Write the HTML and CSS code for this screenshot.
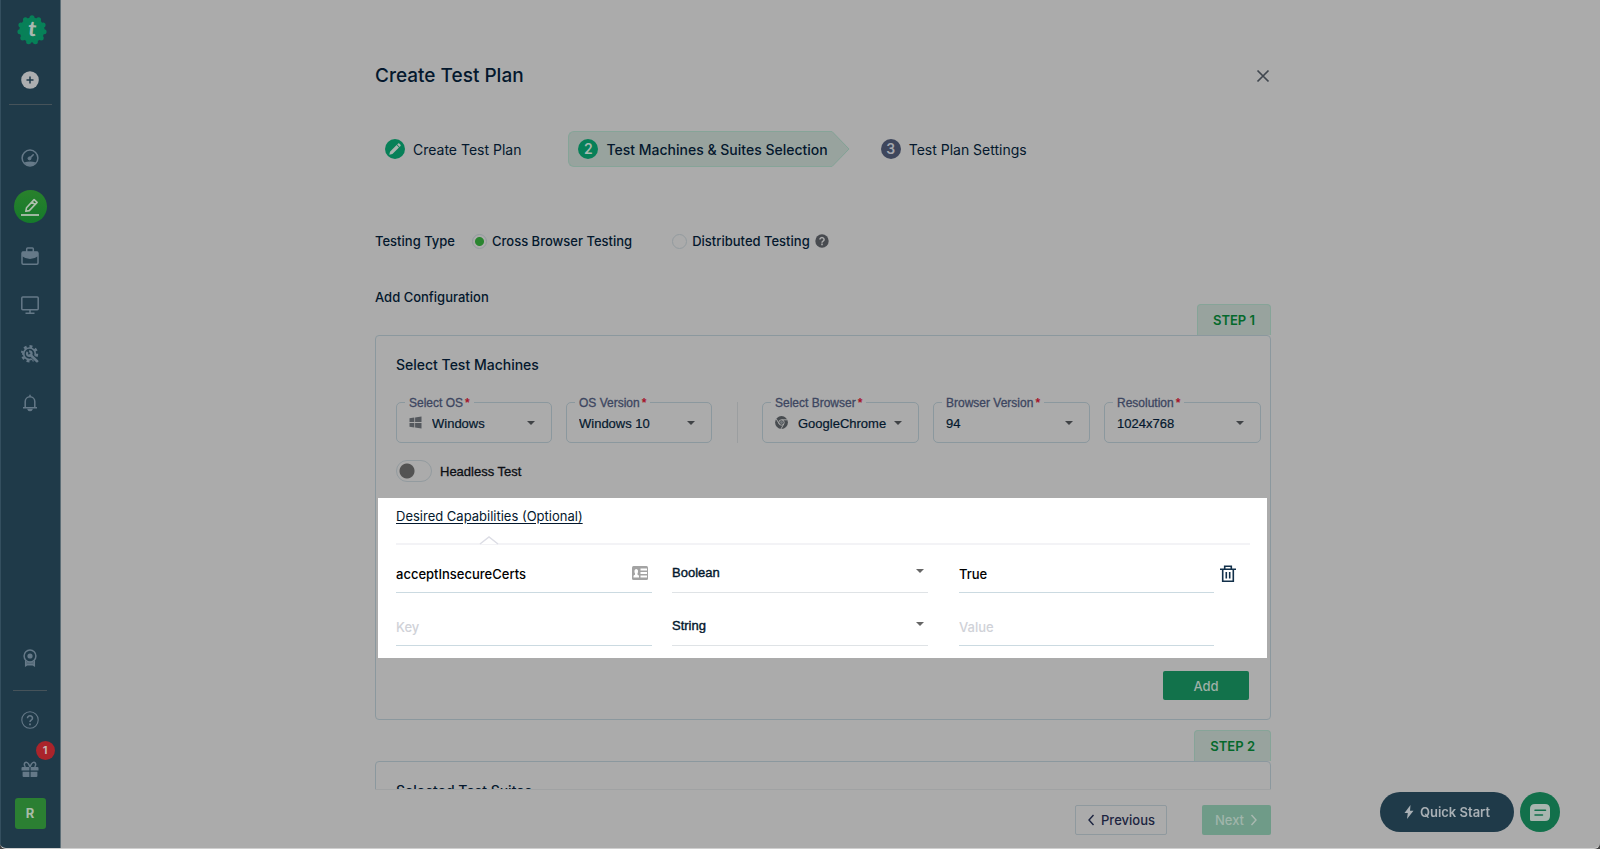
FILE: index.html
```
<!DOCTYPE html>
<html lang="en">
<head>
    <meta charset="UTF-8">
    <meta name="viewport" content="width=device-width, initial-scale=1.0">
    <title>Create Test Plan</title>
    <link rel="stylesheet" href="styles.css">
</head>
<body>
    <div class="app">
        <nav class="sidebar">
            <a href="#" class="logo" aria-label="Home">
                <svg width="32" height="32" viewBox="0 0 32 32">
                    <circle cx="16" cy="16" r="12.5" fill="#078058"/>
                    <circle cx="16" cy="16" r="12.2" fill="none" stroke="#078058" stroke-width="5" stroke-linecap="round" pathLength="11" stroke-dasharray="0 1" transform="rotate(-90 16 16)"/>
                    <text x="16" y="22" text-anchor="middle" class="logo-text" transform="rotate(6 16 16)">t</text>
                </svg>
            </a>
            <a href="#" class="nav-item add-item" aria-label="Add">
                <svg width="18" height="18" viewBox="0 0 18 18">
                    <circle cx="9" cy="9" r="8.8" fill="#acaeb0"/>
                    <path d="M9 5.500v7M5.500 9h7" stroke="#1f3a49" stroke-width="1.500"/>
                </svg>
            </a>
            <hr class="nav-line">
            <a href="#" class="nav-item" aria-label="Dashboard">
                <svg width="18" height="18" viewBox="0 0 18 18" fill="none" stroke="#657988">
                    <circle cx="9" cy="9" r="7.9" stroke-width="1.5"/>
                    <path d="M3 13.600Q9 11.200 15 13.600Q12.500 16.800 9 16.800T3 13.600z" fill="#657988" stroke="none"/>
                    <path d="M8.600 9.400L12.200 5.800" stroke-width="1.600" stroke-linecap="round"/>
                    <circle cx="8.500" cy="9.400" r="1.500" fill="#657988"/>
                </svg>
            </a>
            <a href="#" class="nav-item active" aria-label="Test development">
                <svg width="18" height="18" viewBox="0 0 18 18" fill="none" stroke="#aebfae" stroke-width="1.600">
                    <path d="M4.800 13.300l.7-3.500 7.600-8.200 3 2.800-7.800 8.200zM11 4l2.900 2.700" stroke-linejoin="round"/>
                    <path d="M0 17h18" stroke-width="1.800"/>
                </svg>
            </a>
            <a href="#" class="nav-item" aria-label="Test suites">
                <svg width="18" height="18" viewBox="0 0 18 18">
                    <path d="M5.700 5V1.900Q5.700 1 6.600 1h4.800q.9 0 .9.900V5" fill="none" stroke="#657988" stroke-width="1.500"/>
                    <rect x="1" y="5" width="16" height="12.200" rx="1.200" fill="none" stroke="#657988" stroke-width="1.500"/>
                    <path d="M1 4.800h16v4.400Q13 12 9 12T1 9.200z" fill="#657988"/>
                </svg>
            </a>
            <a href="#" class="nav-item" aria-label="Machines">
                <svg width="18" height="18" viewBox="0 0 18 18" fill="none" stroke="#657988" stroke-width="1.500">
                    <rect x=".8" y="1" width="16.400" height="12.800" rx="1"/>
                    <path d="M9 14v3M4.500 17.200h9"/>
                </svg>
            </a>
            <a href="#" class="nav-item" aria-label="Settings">
                <svg width="18" height="18" viewBox="0 0 18 18" fill="none" stroke="#657988">
                    <circle cx="8.500" cy="8.800" r="5.800" stroke-width="1.700"/>
                    <circle cx="8.500" cy="8.800" r="7.400" stroke-width="2.600" pathLength="16" stroke-dasharray="1 1"/>
                    <circle cx="8.300" cy="8.600" r="2.300" stroke-width="2.200" stroke-dasharray="11.500 3" transform="rotate(-95 8.300 8.600)"/>
                    <path d="M11.500 11.500l4.500 4.700" stroke="#1f3a49" stroke-width="4"/>
                    <path d="M9.500 10l6.600 6.200" stroke-width="2.600" stroke-linecap="round"/>
                </svg>
            </a>
            <a href="#" class="nav-item" aria-label="Notifications">
                <svg width="18" height="18" viewBox="0 0 18 18" fill="none" stroke="#657988" stroke-width="1.500">
                    <path d="M4.200 13.500V7.600a4.800 4.800 0 0 1 9.600 0v5.900M2 13.700h14M9 2.800V.7"/>
                    <path d="M7.200 15.500a1.900 1.600 0 0 0 3.600 0z" fill="#657988"/>
                </svg>
            </a>
            <div class="nav-bottom">
                <a href="#" class="nav-item" aria-label="Rewards">
                    <svg width="18" height="18" viewBox="0 0 18 18" fill="none" stroke="#657988" stroke-width="1.500">
                        <circle cx="9" cy="7" r="5.900"/>
                        <circle cx="9" cy="7" r="2.600" fill="#657988" stroke="none"/>
                        <path d="M4.700 11.300v5.400l1.700-1h5.200l1.700 1v-5.400M4.700 13.900h8.600"/>
                    </svg>
                </a>
                <hr class="nav-line short">
                <a href="#" class="nav-item" aria-label="Help">
                    <svg width="18" height="18" viewBox="0 0 18 18" fill="none" stroke="#657988">
                        <circle cx="9" cy="9" r="8.200" stroke-width="1.100"/>
                        <path d="M6.500 7.200a2.500 2.300 0 1 1 4 1.700q-1.500.9-1.500 2.200" stroke-width="1.600"/>
                        <path d="M9 12.400v1.800" stroke-width="1.800"/>
                    </svg>
                </a>
                <a href="#" class="nav-item gift" aria-label="What is new">
                    <svg width="18" height="18" viewBox="0 0 18 18" fill="#657988">
                        <path d="M1.500 7h6.900v3.600H.5V8q0-1 1-1zM9.600 7h6.900q1 0 1 1v2.600H9.600zM1.600 11.800h6.800v5.100H2.600q-1 0-1-1zM9.600 11.800h6.800v4.100q0 1-1 1H9.600z"/>
                        <path d="M9 7Q7.200 2 5 2.200C2.800 2.400 2.900 6 4.500 6.800M9 7q1.800-5 4-4.800c2.200.2 2.100 3.800.5 4.600" fill="none" stroke="#657988" stroke-width="1.500"/>
                    </svg>
                    <span class="count">1</span>
                </a>
                <a href="#" class="avatar">R</a>
            </div>
        </nav>

        <main class="main">
            <div class="content">
                <div class="page">
                    <header class="page-header">
                        <h1>Create Test Plan</h1>
                        <button type="button" class="close" aria-label="Close">
                            <svg width="14" height="14" viewBox="0 0 14 14"><path d="M1.500 1.500l11 11M12.500 1.500l-11 11" stroke="#40474f" stroke-width="1.700"/></svg>
                        </button>
                    </header>

                    <div class="steps">
                        <a href="#" class="step">
                            <span class="dot">
                                <svg width="20" height="20" viewBox="0 0 20 20"><path d="M4.300 15.700l.7-3 6.600-6.600 2.400 2.400-6.600 6.600zM12.200 5.500l.9-.9q.6-.6 1.200 0l1.200 1.200q.6.600 0 1.200l-.9.900z" fill="#a9b4af"/></svg>
                            </span>
                            Create Test Plan
                        </a>
                        <a href="#" class="step step-current">
                            <span class="dot">2</span>
                            Test Machines &amp; Suites Selection
                            <svg class="step-arrow" width="18" height="36" viewBox="0 0 18 36"><path d="M0 .5L17 18 0 35.500" fill="#98a39e" stroke="#82a295"/></svg>
                        </a>
                        <a href="#" class="step step-next">
                            <span class="dot">3</span>
                            Test Plan Settings
                        </a>
                    </div>

                    <div class="testing-type">
                        <span class="type-title">Testing Type</span>
                        <label class="radio cross"><input type="radio" name="type" checked>Cross Browser Testing</label>
                        <label class="radio"><input type="radio" name="type">Distributed Testing</label>
                        <svg width="14" height="14" viewBox="0 0 14 14">
                            <circle cx="7" cy="7" r="6.700" fill="#484b50"/>
                            <path d="M4.900 5.500a2.100 1.900 0 1 1 3.200 1.600q-1.100.6-1.100 1.600" fill="none" stroke="#ababab" stroke-width="1.500"/>
                            <path d="M7 9.600v1.600" stroke="#ababab" stroke-width="1.600"/>
                        </svg>
                    </div>

                    <div class="config-row">
                        <h2>Add Configuration</h2>
                        <span class="step-tab">STEP 1</span>
                    </div>

                    <section class="card">
                        <h3>Select Test Machines</h3>
                        <div class="machines">
                            <div class="field with-icon">
                                <label for="os">Select OS<b>*</b></label>
                                <svg class="field-icon" width="13" height="13" viewBox="0 0 13 13"><path d="M.5 2.200l4.800-.7v4.600H.5zM6.100 1.400l6.400-1v5.700H6.100zM.5 6.900h4.800v4.600l-4.800-.7zM6.100 6.900h6.400v5.700l-6.400-1z" fill="#55595e"/></svg>
                                <select id="os"><option>Windows</option></select>
                                <svg class="caret" width="8" height="4" viewBox="0 0 8 4"><path d="M0 0h8L4 4z" fill="#404346"/></svg>
                            </div>
                            <div class="field">
                                <label for="osv">OS Version<b>*</b></label>
                                <select id="osv"><option>Windows 10</option></select>
                                <svg class="caret" width="8" height="4" viewBox="0 0 8 4"><path d="M0 0h8L4 4z" fill="#404346"/></svg>
                            </div>
                            <div class="separator"></div>
                            <div class="field with-icon">
                                <label for="browser">Select Browser<b>*</b></label>
                                <svg class="field-icon" width="13" height="13" viewBox="0 0 14 14">
                                    <circle cx="7" cy="7" r="6.900" fill="#484c50"/>
                                    <g fill="none" stroke="#ababab"><circle cx="7" cy="7" r="2.900"/><path d="M7 4.100h6.300M4.500 8.500L1.400 3.200M9.500 8.500L6.400 14"/></g>
                                    <circle cx="7" cy="7" r="1.600" fill="#72767a"/>
                                </svg>
                                <select id="browser"><option>GoogleChrome</option></select>
                                <svg class="caret" width="8" height="4" viewBox="0 0 8 4"><path d="M0 0h8L4 4z" fill="#404346"/></svg>
                            </div>
                            <div class="field">
                                <label for="browserv">Browser Version<b>*</b></label>
                                <select id="browserv"><option>94</option></select>
                                <svg class="caret" width="8" height="4" viewBox="0 0 8 4"><path d="M0 0h8L4 4z" fill="#404346"/></svg>
                            </div>
                            <div class="field">
                                <label for="resolution">Resolution<b>*</b></label>
                                <select id="resolution"><option>1024x768</option></select>
                                <svg class="caret" width="8" height="4" viewBox="0 0 8 4"><path d="M0 0h8L4 4z" fill="#404346"/></svg>
                            </div>
                        </div>
                        <label class="toggle"><input type="checkbox">Headless Test</label>

                        <div class="capabilities">
                            <a href="#" class="cap-link">Desired Capabilities (Optional)</a>
                            <div class="cap-line">
                                <svg width="20" height="9" viewBox="0 0 20 9"><path d="M1 8l9-7 9 7" fill="#fff" stroke="#dcdde5" stroke-width="1.500"/></svg>
                            </div>
                            <div class="cap-grid">
                                <div class="cap-cell key">
                                    <input type="text" aria-label="Key" value="acceptInsecureCerts">
                                    <svg class="contact" width="16" height="14" viewBox="0 0 16 14">
                                        <rect width="16" height="14" rx="1.500" fill="#a3a3a3"/>
                                        <path d="M1.500 11.500V10q0-1 1.500-1.300V7.500Q2.200 6.500 2.500 4.500 2.800 3 4.200 3T6 4.500Q6.200 6.500 5.500 7.500v1.200Q7 9 7 10v1.500zM8.500 2.500H15v2H8.500zM8.500 6H15v2H8.500zM8.500 9.500H15v2H8.500z" fill="#fff"/>
                                    </svg>
                                </div>
                                <div class="cap-cell">
                                    <select aria-label="Type"><option>Boolean</option></select>
                                    <svg class="caret" width="8" height="4" viewBox="0 0 8 4"><path d="M0 0h8L4 4z" fill="#666"/></svg>
                                </div>
                                <div class="cap-cell value"><input type="text" aria-label="Value" value="True"></div>
                                <button type="button" class="delete" aria-label="Delete">
                                    <svg width="16" height="18" viewBox="0 0 16 18" fill="none" stroke="#12304a" stroke-width="1.600">
                                        <path d="M0 4.300h16M4.700 4V1.300h6.600V4M2.700 4.300v11.900h10.600V4.300M6.300 7v6.500M9.700 7v6.500"/>
                                    </svg>
                                </button>
                                <div class="cap-cell key"><input type="text" aria-label="Key" placeholder="Key"></div>
                                <div class="cap-cell">
                                    <select aria-label="Type"><option>String</option></select>
                                    <svg class="caret" width="8" height="4" viewBox="0 0 8 4"><path d="M0 0h8L4 4z" fill="#666"/></svg>
                                </div>
                                <div class="cap-cell value"><input type="text" aria-label="Value" placeholder="Value"></div>
                            </div>
                        </div>

                        <div class="card-actions">
                            <button type="button" class="add-btn">Add</button>
                        </div>
                    </section>

                    <div class="config-row second">
                        <span class="step-tab">STEP 2</span>
                    </div>
                    <section class="card">
                        <h3>Selected Test Suites</h3>
                    </section>
                </div>
            </div>

            <footer class="footer">
                <div class="page footer-inner">
                    <button type="button" class="prev">
                        <svg width="8" height="12" viewBox="0 0 8 12"><path d="M6.500 1L2 6l4.500 5" fill="none" stroke="#1c2440" stroke-width="1.400"/></svg>
                        Previous
                    </button>
                    <button type="button" class="next">
                        Next
                        <svg width="8" height="12" viewBox="0 0 8 12"><path d="M1.500 1L6 6l-4.500 5" fill="none" stroke="#a9b8b0" stroke-width="1.400"/></svg>
                    </button>
                </div>
            </footer>
        </main>

        <div class="floating">
            <button type="button" class="quick-start">
                <svg width="10" height="14" viewBox="0 0 10 14"><path d="M6.500 0L.5 8h3.300L3 14l6.500-8.300H6z" fill="#a9b0b5"/></svg>
                Quick Start
            </button>
            <button type="button" class="chat" aria-label="Chat">
                <svg width="20" height="17" viewBox="0 0 20 17">
                    <path d="M5 0h10q5 0 5 5v7q0 5-5 5H1.500Q0 17 0 15.500V5q0-5 5-5z" fill="#a8b5af"/>
                    <path d="M5 6.300h10.500M5 11h7.500" stroke="#12704b" stroke-width="1.500" stroke-linecap="round"/>
                </svg>
            </button>
        </div>
    </div>
</body>
</html>
```
FILE: styles.css
```
* {
    box-sizing: border-box;
}

html {
    background-color: #444;
}

body {
    font-family: Inter, sans-serif;
    font-size: 13px;
    color: #04182d;
    margin: 0;
}

h1, h2, h3 {
    margin: 0;
    font-weight: 500;
}

a {
    color: inherit;
    text-decoration: none;
}

svg {
    display: block;
    flex: none;
}

button, input, select {
    font-family: inherit;
    font-size: inherit;
    color: inherit;
    margin: 0;
}

button {
    cursor: pointer;
    border: none;
    padding: 0;
    background: none;
}

.app {
    display: flex;
    height: 100vh;
    background-color: #ababab;
    border-bottom: 1px solid #cfcfcf;
    border-radius: 0 0 6px 6px;
    overflow: hidden;
}

/* Sidebar */
.sidebar {
    width: 61px;
    flex: none;
    display: flex;
    flex-direction: column;
    align-items: center;
    background-color: #1f3a49;
    border-left: 1px solid #344f5f;
    border-right: 1px solid #5c6d76;
    padding-top: 14px;
    padding-right: 1px;
}

.logo {
    margin-left: 3px;
}

.logo-text {
    font-family: Lato, sans-serif;
    font-size: 21px;
    font-weight: 900;
    fill: #a9b8b1;
}

.nav-item {
    display: flex;
    justify-content: center;
    align-items: center;
    width: 33px;
    height: 33px;
    margin-bottom: 16px;
    position: relative;
}

.add-item {
    margin: 17px 0 8px;
}

.nav-line {
    width: 43px;
    margin: 0 0 36px;
    border: none;
    border-top: 1px solid #46535a;
}

.nav-line.short {
    width: 34px;
    margin: 0 0 12px;
}

.nav-item.active {
    border-radius: 50%;
    background: linear-gradient(#29812c, #157a2b);
}

.nav-bottom {
    margin-top: auto;
    margin-bottom: 19px;
    display: flex;
    flex-direction: column;
    align-items: center;
}

.nav-item.gift {
    margin-bottom: 13px;
}

.count {
    position: absolute;
    top: -11px;
    right: -8px;
    width: 19px;
    height: 19px;
    border-radius: 50%;
    background-color: #aa242b;
    color: #c5b3b4;
    font-size: 11px;
    font-weight: 700;
    line-height: 19px;
    text-align: center;
}

.avatar {
    width: 31px;
    height: 31px;
    border-radius: 3px;
    background-color: #2b7f32;
    color: #a9bca9;
    font-weight: 700;
    line-height: 31px;
    text-align: center;
}

/* Main column */
.main {
    flex: 1;
    display: flex;
    flex-direction: column;
    min-width: 0;
}

.content {
    flex: 1;
    min-height: 0;
    overflow: hidden;
    padding-right: 15px;
}

.page {
    max-width: 896px;
    margin: 0 auto;
}

.page-header {
    display: flex;
    justify-content: space-between;
    align-items: center;
    padding-top: 64px;
}

.page-header h1 {
    font-size: 19px;
    line-height: 24px;
}

.close {
    padding: 1px;
}

/* Steps */
.steps {
    display: flex;
    align-items: center;
    margin-top: 43px;
    padding-left: 10px;
    font-size: 14px;
}

.step {
    display: flex;
    align-items: center;
    gap: 8px;
    height: 36px;
}

.dot {
    width: 20px;
    height: 20px;
    border-radius: 50%;
    background-color: #078058;
    color: #a9b8b1;
    font-weight: 600;
    line-height: 20px;
    text-align: center;
}

.step-current {
    position: relative;
    margin-left: 47px;
    padding: 0 4px 0 9px;
    border: 1px solid #86a498;
    border-right: none;
    border-radius: 6px 0 0 6px;
    background-color: #98a39e;
    font-weight: 500;
}

.step-arrow {
    position: absolute;
    left: 100%;
    top: -1px;
}

.step-next {
    margin-left: 49px;
}

.step-next .dot {
    background-color: #3e465c;
    color: #a4a7ae;
}

/* Testing type */
.testing-type {
    display: flex;
    align-items: center;
    height: 20px;
    margin-top: 64px;
    font-weight: 500;
}

.type-title {
    margin-right: 17px;
}

.radio {
    display: flex;
    align-items: center;
    gap: 5px;
    margin-right: 5px;
}

.radio.cross {
    margin-right: 40px;
}

.radio input {
    appearance: none;
    width: 15px;
    height: 15px;
    border: 1px solid #939b9f;
    border-radius: 50%;
}

.radio input:checked {
    background: radial-gradient(circle, #2a8530 4px, transparent 5px);
}

.config-row {
    display: flex;
    justify-content: space-between;
    height: 48px;
    margin-top: 36px;
}

.config-row.second {
    justify-content: flex-end;
    height: 31px;
    margin-top: 10px;
}

.config-row h2 {
    font-size: 13px;
    line-height: 20px;
}

.step-tab {
    align-self: flex-end;
    height: 31px;
    padding: 0 15px;
    border: 1px solid #86a498;
    border-bottom: none;
    border-radius: 4px 4px 0 0;
    background-color: #98a39e;
    color: #04692b;
    font-weight: 600;
    line-height: 31px;
}

/* Card */
.card {
    border: 1px solid #8b989e;
    border-radius: 4px;
    padding: 19px 0;
}

.card h3 {
    padding-left: 20px;
    font-size: 14px;
    line-height: 20px;
}

.machines {
    display: grid;
    grid-template-columns: 156fr 146fr 22px 157fr 157fr 157fr;
    gap: 14px;
    margin: 27px 9px 0 20px;
}

.separator {
    justify-self: center;
    width: 1px;
    background-color: #9b9ea0;
}

.field {
    position: relative;
    height: 41px;
    border: 1px solid #8b989e;
    border-radius: 5px;
}

.field label {
    position: absolute;
    top: -8px;
    left: 8px;
    padding: 0 4px;
    background-color: #ababab;
    color: #3d4660;
    font-family: "Liberation Sans", Arial, sans-serif;
    font-size: 12px;
    line-height: 16px;
    -webkit-text-stroke: 0.3px #3d4660;
}

.field b {
    margin-left: 2px;
    color: #a5142a;
    -webkit-text-stroke: 0;
}

.field select {
    appearance: none;
    width: 100%;
    height: 39px;
    padding: 1px 20px 0 12px;
    border: none;
    background: none;
    font-family: "Liberation Sans", Arial, sans-serif;
    -webkit-text-stroke: 0.2px #04182d;
}

.field.with-icon select {
    padding-left: 35px;
}

.field-icon {
    position: absolute;
    top: 13px;
    left: 12px;
}

.field .caret {
    position: absolute;
    top: 18px;
    right: 16px;
    pointer-events: none;
}

.toggle {
    display: inline-flex;
    align-items: center;
    gap: 8px;
    margin: 17px 0 0 20px;
    color: #0c0f14;
    font-family: "Liberation Sans", Arial, sans-serif;
    vertical-align: top;
    -webkit-text-stroke: 0.3px #0c0f14;
}

.toggle input {
    appearance: none;
    width: 36px;
    height: 22px;
    border: 1px solid #939b9f;
    border-radius: 11px;
    background: radial-gradient(circle at 10px 10px, #535353 7px, transparent 8px);
}

/* Desired capabilities */
.capabilities {
    margin: 16px 3px 0 2px;
    padding: 8px 17px 12px 18px;
    background-color: #fff;
}

.cap-link {
    display: inline-block;
    line-height: 20px;
    text-decoration: underline;
    text-underline-offset: 2px;
    vertical-align: top;
}

.cap-line {
    position: relative;
    margin-top: 17px;
    border-top: 2px solid #f3f3f6;
}

.cap-line svg {
    position: absolute;
    left: 83px;
    bottom: 0;
}

.cap-grid {
    display: grid;
    grid-template-columns: 276fr 287fr 255fr 36px;
    row-gap: 17px;
    padding-top: 12px;
}

.cap-cell {
    position: relative;
    margin-right: 31px;
    border-bottom: 1px solid #dfe3e6;
}

.cap-cell.key {
    margin-right: 20px;
    border-color: #cbdae1;
}

.cap-cell.value {
    margin-right: 0;
    border-color: #cbdae1;
}

.cap-cell input,
.cap-cell select {
    display: block;
    width: 100%;
    height: 35px;
    padding: 0 0 2px;
    border: none;
    background: none;
    color: #000;
    font-weight: 500;
}

.cap-cell select {
    appearance: none;
    padding-bottom: 5px;
    color: #04182d;
    font-family: "Liberation Sans", Arial, sans-serif;
    -webkit-text-stroke: 0.4px #04182d;
}

.cap-cell input::placeholder {
    color: #d0d2d8;
    opacity: 1;
}

.cap-cell .caret {
    position: absolute;
    top: 12px;
    right: 4px;
    pointer-events: none;
}

.contact {
    position: absolute;
    top: 9px;
    right: 4px;
}

.delete {
    padding: 0 0 2px 6px;
}

.card-actions {
    display: flex;
    justify-content: flex-end;
    padding: 13px 21px 0;
}

.add-btn {
    width: 86px;
    height: 29px;
    border-radius: 2px;
    background-color: #12724b;
    color: #9fb0a8;
    font-weight: 500;
}

/* Footer */
.footer {
    height: 59px;
    padding-right: 15px;
}

.footer-inner {
    display: flex;
    justify-content: flex-end;
    gap: 35px;
    padding-top: 15px;
    border-top: 1px solid #a0a2a3;
}

.prev, .next {
    display: flex;
    justify-content: center;
    align-items: center;
    gap: 6px;
    height: 30px;
    border-radius: 2px;
    font-weight: 500;
}

.prev {
    width: 92px;
    border: 1px solid #8f999e;
    color: #1c2440;
}

.next {
    width: 69px;
    background-color: #6f9b88;
    color: #a0b5ab;
}

.floating {
    position: fixed;
    right: 40px;
    bottom: 17px;
    display: flex;
    gap: 6px;
}

.quick-start {
    display: flex;
    justify-content: center;
    align-items: center;
    gap: 6px;
    width: 134px;
    height: 40px;
    border-radius: 20px;
    background-color: #1f3a49;
    color: #a9b0b5;
    font-weight: 600;
}

.chat {
    display: flex;
    justify-content: center;
    align-items: center;
    width: 40px;
    height: 40px;
    border-radius: 50%;
    background-color: #12704b;
}
```
